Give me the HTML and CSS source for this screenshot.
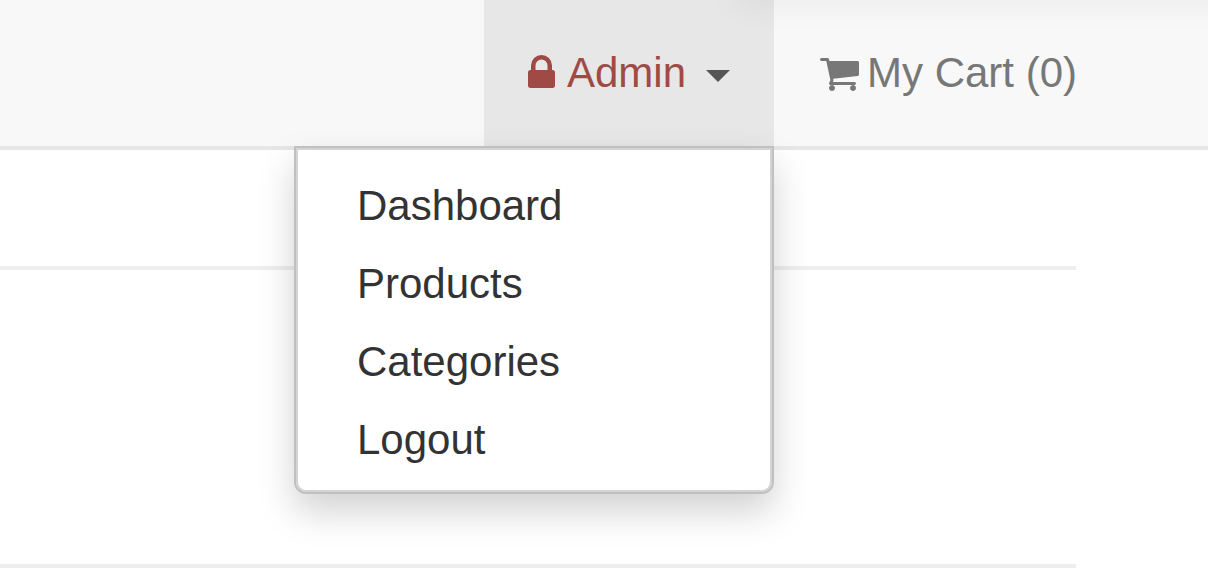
FILE: index.html
```html
<!DOCTYPE html>
<html lang="en">
<head>
<meta charset="utf-8">
<meta name="viewport" content="width=device-width, initial-scale=1">
<title>Admin menu</title>
<link rel="stylesheet" href="styles.css">
</head>
<body>
<header class="navbar">
  <nav class="nav">
    <div class="nav-item dropdown">
      <button class="nav-link admin" type="button" aria-haspopup="true" aria-expanded="true">
        <svg class="icon-lock" viewBox="0 0 1152 1792" aria-hidden="true"><path d="M320 768h512v-192q0-106-75-181t-181-75-181 75-75 181v192zm832 96v576q0 40-28 68t-68 28h-960q-40 0-68-28t-28-68v-576q0-40 28-68t68-28h32v-192q0-184 132-316t316-132 316 132 132 316v192h32q40 0 68 28t28 68z"/></svg>
        <span>Admin</span>
        <span class="caret"></span>
      </button>
      <ul class="menu">
        <li><a href="#">Dashboard</a></li>
        <li><a href="#">Products</a></li>
        <li><a href="#">Categories</a></li>
        <li><a href="#">Logout</a></li>
      </ul>
    </div>
    <a class="nav-link cart" href="#">
      <svg class="icon-cart" viewBox="0 0 1664 1792" aria-hidden="true"><path d="M640 1536q0 52-38 90t-90 38-90-38-38-90 38-90 90-38 90 38 38 90zm896 0q0 52-38 90t-90 38-90-38-38-90 38-90 90-38 90 38 38 90zm128-1088v512q0 24-16.500 42.500t-40.500 21.500l-1044 122q13 60 13 70 0 16-24 64h920q26 0 45 19t19 45-19 45-45 19h-1024q-26 0-45-19t-19-45q0-11 8-31.500t16-36 21.500-40 15.500-29.500l-177-823h-204q-26 0-45-19t-19-45 19-45 45-19h256q16 0 28.500 6.500t19.500 15.500 13 24.500 8 26 5.500 29.500 4.500 26h1201q26 0 45 19t19 45z"/></svg>
      <span>My Cart (0)</span>
    </a>
  </nav>
</header>
<main class="content">
  <section class="heading"></section>
  <section class="panel"></section>
</main>
</body>
</html>
```
FILE: styles.css
```css
* {
  box-sizing: border-box;
}

body {
  margin: 0;
  background: #fff;
  color: #333;
  font-family: "Liberation Sans", Arial, sans-serif;
  font-size: 42px;
  line-height: 60px;
  overflow-x: hidden;
}

.navbar {
  position: relative;
  background: #f8f8f8;
  border-bottom: 4px solid #e7e7e7;
}

/* soft shade along the top right edge */
.navbar::after {
  content: "";
  position: absolute;
  top: -16px;
  left: 61%;
  right: -40px;
  height: 12px;
  box-shadow: 0 0 36px rgba(0, 0, 0, 0.14);
  pointer-events: none;
}

.nav {
  display: flex;
  justify-content: flex-end;
  padding-right: 85px;
}

.dropdown {
  position: relative;
}

.nav-link {
  display: flex;
  align-items: center;
  gap: 12px;
  padding: 43px 44px;
  border: 0;
  background: transparent;
  color: #777;
  font: inherit;
  text-decoration: none;
  white-space: nowrap;
}

.nav-link span {
  display: block;
}

.admin {
  background: #e7e7e7;
  color: #a04a45;
}

.cart {
  padding: 43px 46px;
  gap: 8px;
}

.icon-lock,
.icon-cart {
  height: 42px;
  fill: currentColor;
}

.icon-lock {
  width: 27px;
}

.icon-cart {
  width: 39px;
}

.caret {
  margin: 6px 0 0 8px;
  border-top: 12px solid #555;
  border-left: 12px solid transparent;
  border-right: 12px solid transparent;
}

.menu {
  position: absolute;
  z-index: 1;
  top: 100%;
  right: 0;
  width: 480px;
  margin: 0;
  padding: 19px 0 13px;
  list-style: none;
  background: #fff;
  border: 2px solid #c0c0c0;
  border-radius: 0 0 12px 12px;
  box-shadow: inset 0 0 0 2px #d4d4d4, 0 18px 36px rgba(0, 0, 0, 0.175);
}

.menu a {
  display: block;
  padding: 9px 61px;
  color: #333;
  text-decoration: none;
}

.content {
  padding-right: 132px;
}

.heading,
.panel {
  border-bottom: 4px solid #eee;
}

.heading {
  min-height: 120px;
}

.panel {
  min-height: 298px;
}
```
